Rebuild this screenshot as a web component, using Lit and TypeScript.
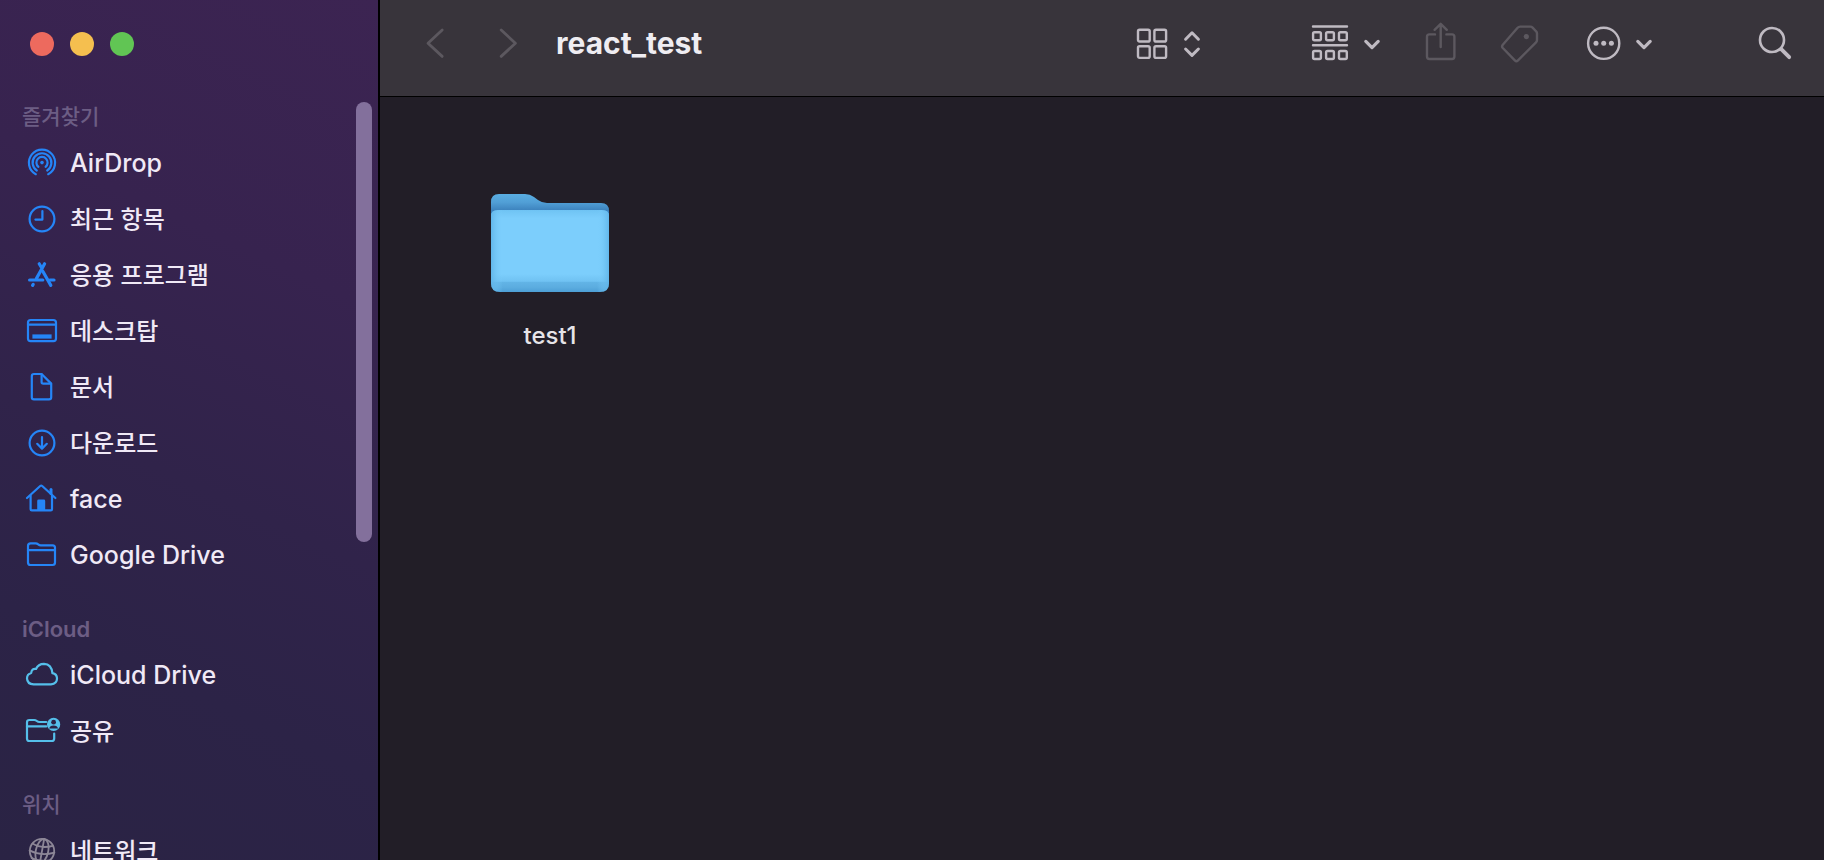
import { LitElement, html, css, svg, TemplateResult } from "lit";
import { customElement, property } from "lit/decorators.js";

type Glyph = TemplateResult<2>;

interface Place {
  name: string;
  icon: string;
}

interface Section {
  title: string;
  tone: "blue" | "cyan" | "gray";
  places: Place[];
}

const PLACE_ICONS: Record<string, Glyph> = {
  airdrop: svg`
    <path d="M11.8 29.2A13.1 13.1 0 1 1 24.2 29.2"/>
    <path d="M12.8 25.5A9.4 9.4 0 1 1 23.2 25.5"/>
    <path d="M14.4 21.8A5.6 5.6 0 1 1 21.6 21.8"/>
    <circle cx="18" cy="17.6" r="1.8" fill="currentColor" stroke="none"/>`,
  recent: svg`
    <circle cx="18" cy="18" r="12.4"/>
    <path d="M18.4 10V18.6H11.4"/>`,
  apps: svg`
    <g stroke-width="3.2">
      <path d="M15.2 6.8L17 9.8"/>
      <path d="M20.6 6.8L12.4 21.6"/>
      <path d="M5.6 23H18.8"/>
      <path d="M25.8 23H30"/>
      <path d="M9.2 27.4L8.6 28.4"/>
      <path d="M18.8 14.2L26.8 28.4"/>
    </g>`,
  desktop: svg`
    <rect x="4" y="7" width="28" height="21.2" rx="2.6"/>
    <path d="M4 11.6H32"/>
    <rect x="8.4" y="21.4" width="19.2" height="4.2" fill="currentColor" stroke="none"/>`,
  document: svg`
    <path d="M10 5H17.6L27.2 14.6V28.2Q27.2 30.4 25 30.4H10Q7.8 30.4 7.8 28.2V7.2Q7.8 5 10 5Z"/>
    <path d="M17.6 5.4V13Q17.6 14.6 19.2 14.6H26.8"/>`,
  download: svg`
    <circle cx="18" cy="18" r="12.4"/>
    <path d="M18 12V23.4M13.2 18.8L18 23.6L22.8 18.8"/>`,
  home: svg`
    <path d="M3 17L16.2 5Q17.2 4.2 18.2 5L31.4 17"/>
    <path d="M6.6 14.6V28.2Q6.6 29.4 7.8 29.4H26.8Q28 29.4 28 28.2V14.6"/>
    <path d="M27 8.4V12.4" stroke-width="3"/>
    <path d="M13.2 29.6V20Q13.2 18.6 14.6 18.6H19.8Q21.2 18.6 21.2 20V29.6Z" fill="currentColor" stroke="none"/>`,
  folder: svg`
    <path d="M6.6 6.4H11.6Q13 6.4 14.2 7.4Q15.4 8.4 16.8 8.4H28.6Q31 8.4 31 10.8V25.6Q31 28 28.6 28H6.4Q4 28 4 25.6V9Q4 6.4 6.6 6.4Z"/>
    <path d="M4 13.2H31"/>`,
  cloud: svg`
    <path d="M9.6 27.4H27Q33 27 33 21.6Q33 17 28.4 16.2Q27.6 7 20 6.8Q14.2 6.8 12 12Q7.6 11.2 7.2 16Q3 17.2 3 21.4Q3.2 27 9.6 27.4Z"/>`,
  shared: svg`
    <path d="M22.2 9H15.6Q14 9 12.8 8Q11.6 7 10.2 7H5.4Q3 7 3 9.4V25.4Q3 28 5.4 28H27.6Q30.2 28 30.2 25.4V20.6"/>
    <path d="M3 13.4H22.2"/>
    <circle cx="29.6" cy="11.4" r="6.6" fill="currentColor" stroke="none"/>
    <g class="cutout"><circle cx="29.6" cy="9.2" r="2.4"/><path d="M25.2 15.4Q25.8 12.4 29.6 12.4Q33.4 12.4 34 15.4Z"/></g>`,
  network: svg`
    <g stroke-width="1.8">
      <circle cx="18" cy="18" r="12.2"/>
      <ellipse cx="18" cy="18" rx="6.2" ry="12.2" transform="rotate(12 18 18)"/>
      <path d="M20.2 5.8L15.8 30.2"/>
      <path d="M8.6 10.6Q17 16 28.8 12.8"/>
      <path d="M5.6 17.4Q17 23.4 30.4 19.6"/>
      <path d="M7.6 25Q16 29 25.6 27.4"/>
    </g>`,
};

const SECTIONS: Section[] = [
  {
    title: "즐겨찾기",
    tone: "blue",
    places: [
      { name: "AirDrop", icon: "airdrop" },
      { name: "최근 항목", icon: "recent" },
      { name: "응용 프로그램", icon: "apps" },
      { name: "데스크탑", icon: "desktop" },
      { name: "문서", icon: "document" },
      { name: "다운로드", icon: "download" },
      { name: "face", icon: "home" },
      { name: "Google Drive", icon: "folder" },
    ],
  },
  {
    title: "iCloud",
    tone: "cyan",
    places: [
      { name: "iCloud Drive", icon: "cloud" },
      { name: "공유", icon: "shared" },
    ],
  },
  {
    title: "위치",
    tone: "gray",
    places: [{ name: "네트워크", icon: "network" }],
  },
];

@customElement("finder-sidebar")
export class FinderSidebar extends LitElement {
  @property({ attribute: false }) sections: Section[] = [];

  static styles = css`
    :host {
      position: relative;
      display: flex;
      flex-direction: column;
      overflow: hidden;
      background: linear-gradient(205deg, #3c2452 0%, #37234f 30%, #30234a 55%, #2c2347 75%, #2a2344 100%);
    }
    .lights {
      display: flex;
      gap: 16px;
      padding: 32px 30px 0;
      height: 67px;
      flex: none;
    }
    .light {
      width: 24px;
      height: 24px;
      padding: 0;
      border: 0;
      border-radius: 50%;
    }
    .close { background: #ed6a5e; }
    .minimize { background: #f5bf4f; }
    .zoom { background: #61c554; }
    .places {
      flex: 1;
      min-height: 0;
      overflow: hidden;
    }
    .section + .section { padding-top: 28px; }
    .title {
      margin: 0;
      padding-left: 22px;
      font-size: 22px;
      font-weight: 600;
      line-height: 36px;
      color: #6c5d84;
    }
    .title:lang(ko) {
      font-size: 21px;
      font-weight: 500;
    }
    .list {
      margin: 0;
      padding: 0;
      list-style: none;
    }
    .place {
      display: flex;
      align-items: center;
      gap: 10px;
      height: 56px;
      padding-left: 24px;
      font-size: 25px;
      font-weight: 500;
      color: #f0e9f6;
      text-decoration: none;
      white-space: nowrap;
    }
    .place:lang(ko) { font-size: 24px; }
    .name:lang(ko) { padding-bottom: 4px; }
    .icon {
      width: 36px;
      height: 36px;
      flex: none;
      overflow: visible;
      fill: none;
      stroke: currentColor;
      stroke-width: 2.2;
      stroke-linecap: round;
      stroke-linejoin: round;
    }
    .blue { color: #2585f7; }
    .cyan { color: #55bfea; }
    .gray { color: #8d8797; }
    .cutout { fill: #2c2346; stroke: none; }
    .thumb {
      position: absolute;
      top: 102px;
      right: 6px;
      width: 16px;
      height: calc((100% - 102px) * 0.58);
      border-radius: 8px;
      background: #83709c;
    }
  `;

  private language(text: string) {
    return /[가-힣]/.test(text) ? "ko" : "en";
  }

  render() {
    return html`
      <div class="lights">
        <button class="light close" aria-label="닫기"></button>
        <button class="light minimize" aria-label="최소화"></button>
        <button class="light zoom" aria-label="확대"></button>
      </div>
      <nav class="places">
        ${this.sections.map(
          (section) => html`
            <section class="section">
              <h2 class="title" lang=${this.language(section.title)}>${section.title}</h2>
              <ul class="list">
                ${section.places.map(
                  (place) => html`
                    <li>
                      <a class="place" href="#${place.icon}" lang=${this.language(place.name)}>
                        <svg class="icon ${section.tone}" viewBox="0 0 36 36" aria-hidden="true">
                          ${PLACE_ICONS[place.icon]}
                        </svg>
                        <span class="name">${place.name}</span>
                      </a>
                    </li>
                  `
                )}
              </ul>
            </section>
          `
        )}
      </nav>
      <div class="thumb"></div>
    `;
  }
}

@customElement("finder-toolbar")
export class FinderToolbar extends LitElement {
  @property() heading = "";

  static styles = css`
    :host {
      display: flex;
      align-items: center;
      box-sizing: border-box;
      height: 97px;
      padding: 0 32px 10px 46px;
      border-bottom: 1px solid #000;
      background: #38343b;
      color: #bfbac2;
    }
    .history {
      display: flex;
      gap: 55px;
    }
    .title {
      flex: 1;
      margin: 0 16px 0 39px;
      font-size: 30px;
      line-height: 40px;
      font-weight: 700;
      color: #efedf2;
    }
    .actions {
      display: flex;
      gap: 44px;
    }
    .apart-after { margin-right: 68px; }
    .apart-before { margin-left: 62px; }
    .tool {
      display: block;
      padding: 0;
      border: 0;
      background: none;
      color: inherit;
    }
    .tool:disabled { color: #5c585f; }
    .glyph {
      display: block;
      overflow: visible;
      fill: none;
      stroke: currentColor;
      stroke-width: 2.4;
      stroke-linecap: round;
      stroke-linejoin: round;
    }
  `;

  private tool(label: string, width: number, art: Glyph, disabled = false, extra = "") {
    return html`
      <button class="tool ${extra}" aria-label=${label} ?disabled=${disabled}>
        <svg class="glyph" width=${width} height="40" viewBox="0 0 ${width} 40">${art}</svg>
      </button>
    `;
  }

  render() {
    return html`
      <div class="history">
        ${this.tool("뒤로", 18, svg`<path d="M16.2 7L2 20.2L16.2 33.4" stroke-width="2.8"/>`, true)}
        ${this.tool("앞으로", 18, svg`<path d="M2.2 7L16.4 20.2L2.2 33.4" stroke-width="2.8"/>`, true)}
      </div>
      <h1 class="title">${this.heading}</h1>
      <div class="actions">
        ${this.tool(
          "보기",
          64,
          svg`
            <rect x="2" y="6.8" width="11.7" height="11.7" rx="1.6"/>
            <rect x="18.4" y="6.8" width="11.7" height="11.7" rx="1.6"/>
            <rect x="2" y="23.2" width="11.7" height="11.7" rx="1.6"/>
            <rect x="18.4" y="23.2" width="11.7" height="11.7" rx="1.6"/>
            <path d="M49.6 16.2L56 9.8L62.4 16.2M49.6 26L56 32.4L62.4 26" stroke-width="3"/>`,
          false,
          "apart-after"
        )}
        ${this.tool(
          "그룹",
          68,
          svg`
            <path d="M1 3.5H35M1 22.3H35"/>
            <rect x="1.1" y="9.2" width="7.8" height="8" rx="1.4"/>
            <rect x="14.1" y="9.2" width="7.8" height="8" rx="1.4"/>
            <rect x="27" y="9.2" width="7.8" height="8" rx="1.4"/>
            <rect x="1.1" y="28" width="7.8" height="8" rx="1.4"/>
            <rect x="14.1" y="28" width="7.8" height="8" rx="1.4"/>
            <rect x="27" y="28" width="7.8" height="8" rx="1.4"/>
            <path d="M53.8 18.4L60 24.6L66.2 18.4" stroke-width="3.2"/>`
        )}
        ${this.tool(
          "공유",
          33,
          svg`
            <path d="M11 11.4H5.4Q3 11.4 3 13.8V33.6Q3 36 5.4 36H28Q30.4 36 30.4 33.6V13.8Q30.4 11.4 28 11.4H22.4"/>
            <path d="M16.7 24V1M10.6 6.8L16.7 0.8L22.8 6.8"/>`,
          true
        )}
        ${this.tool(
          "태그",
          38,
          svg`
            <path d="M19.2 3.6H29.4Q30.6 3.6 31.6 4.6L35 8.2Q36 9.2 36 10.6V17Q36 18.4 35 19.4L17 37.4Q15.4 39 13.8 37.4L1.8 25Q0.4 23.4 1.8 21.8L16.6 4.8Q17.6 3.6 19.2 3.6Z"/>
            <circle cx="25.3" cy="13.6" r="2.6" fill="currentColor" stroke="none"/>`,
          true
        )}
        ${this.tool(
          "동작",
          69,
          svg`
            <circle cx="20.7" cy="20.3" r="15.6"/>
            <g fill="currentColor" stroke="none">
              <circle cx="13" cy="20.3" r="2.5"/>
              <circle cx="20.7" cy="20.3" r="2.5"/>
              <circle cx="28.4" cy="20.3" r="2.5"/>
            </g>
            <path d="M54.8 18.4L61 24.6L67.2 18.4" stroke-width="3.2"/>`
        )}
        ${this.tool(
          "검색",
          34,
          svg`
            <circle cx="14" cy="17" r="12" stroke-width="2.6"/>
            <path d="M23.2 26.2L31.2 34.2" stroke-width="3.8"/>`,
          false,
          "apart-before"
        )}
      </div>
    `;
  }
}

@customElement("finder-folder")
export class FinderFolder extends LitElement {
  @property() name = "";

  static styles = css`
    :host { display: block; }
    .item {
      display: flex;
      flex-direction: column;
      align-items: center;
      gap: 26px;
      width: 100%;
      padding: 0;
      border: 0;
      background: none;
      font: inherit;
      font-size: 24px;
      line-height: 36px;
      font-weight: 500;
      color: #e6e4e8;
    }
    .art { display: block; }
  `;

  render() {
    return html`
      <button class="item">
        <svg class="art" width="118" height="99" viewBox="0 0 118 99" aria-hidden="true">
          <defs>
            <linearGradient id="back" x1="0" y1="0" x2="0" y2="1">
              <stop offset="0" stop-color="#5aaee2"/>
              <stop offset="0.14" stop-color="#519fd6"/>
              <stop offset="0.28" stop-color="#3c82bd"/>
              <stop offset="1" stop-color="#3c82bd"/>
            </linearGradient>
            <linearGradient id="side" x1="0" y1="0" x2="1" y2="0">
              <stop offset="0" stop-color="#5fb4e8" stop-opacity="0.9"/>
              <stop offset="0.1" stop-color="#7ccffd" stop-opacity="0"/>
              <stop offset="0.9" stop-color="#7ccffd" stop-opacity="0"/>
              <stop offset="1" stop-color="#5fb4e8" stop-opacity="0.9"/>
            </linearGradient>
            <linearGradient id="front" x1="0" y1="0" x2="0" y2="1">
              <stop offset="0" stop-color="#6fc3f3"/>
              <stop offset="0.1" stop-color="#7ccefc"/>
              <stop offset="0.78" stop-color="#7ccefc"/>
              <stop offset="0.87" stop-color="#70c2f2"/>
              <stop offset="0.88" stop-color="#62b4e6"/>
              <stop offset="0.94" stop-color="#5cade0"/>
              <stop offset="1" stop-color="#4d9fd6"/>
            </linearGradient>
          </defs>
          <path fill="url(#back)" d="M0 9Q0 1 8 1H34Q39 1 43 4L47 7Q51 10 56 10H110Q118 10 118 18V60H0Z"/>
          <path fill="url(#front)" d="M0 23Q0 17 7 17H111Q118 17 118 23V90Q118 99 109 99H9Q0 99 0 90Z"/>
          <path fill="url(#side)" d="M0 23Q0 17 7 17H111Q118 17 118 23V90Q118 99 109 99H9Q0 99 0 90Z"/>
        </svg>
        <span>${this.name}</span>
      </button>
    `;
  }
}

@customElement("app-root")
export class AppRoot extends LitElement {
  static styles = css`
    :host {
      display: grid;
      grid-template-columns: 378px minmax(0, 1fr);
      height: 100vh;
      overflow: hidden;
      font-family: Inter, "Noto Sans CJK KR", sans-serif;
      background: #221e27;
    }
    .window {
      display: flex;
      flex-direction: column;
      border-left: 2px solid #000;
    }
    .files {
      display: grid;
      grid-template-columns: repeat(auto-fill, 140px);
      gap: 40px;
      padding: 96px 100px;
    }
  `;

  render() {
    return html`
      <finder-sidebar .sections=${SECTIONS}></finder-sidebar>
      <main class="window">
        <finder-toolbar heading="react_test"></finder-toolbar>
        <div class="files">
          <finder-folder name="test1"></finder-folder>
        </div>
      </main>
    `;
  }
}
